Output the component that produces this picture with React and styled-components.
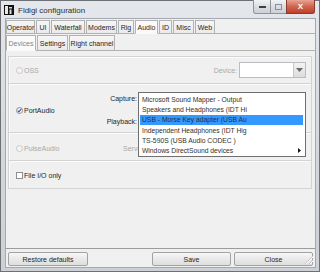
import React from "react";
import styled, { createGlobalStyle } from "styled-components";

const GlobalStyle = createGlobalStyle`
  html, body { margin: 0; padding: 0; background: #ffffff; }
  body { font-family: "Liberation Sans", Arial, sans-serif; font-size: 7px; color: #2b2b2b; }
  * { box-sizing: border-box; }
`;

const Window = styled.div`
  position: relative;
  width: 320px;
  height: 272px;
  display: flex;
  flex-direction: column;
  background: linear-gradient(#e4e7eb, #d3d7dc 60%, #cdd1d6);
  border: 1px solid #6d7075;
  padding: 0 3px 3px 4px;
`;

const TitleBar = styled.div`
  height: 17px;
  display: flex;
  align-items: center;
  gap: 4px;
  margin-left: -1px;
`;

const TitleText = styled.span`
  flex: 1;
  font-size: 8px;
  color: #303030;
  margin-top: 1px;
`;

const CaptionGroup = styled.div`
  align-self: flex-start;
  display: flex;
  margin-top: -1px;
  margin-right: 1px;
`;

const CaptionButton = styled.div`
  width: ${(p) => p.$w}px;
  height: 14px;
  display: flex;
  align-items: center;
  justify-content: center;
  border: 1px solid ${(p) => (p.$close ? "#8a3a30" : "#8f959c")};
  border-top: none;
  margin-left: -1px;
  background: ${(p) =>
    p.$close
      ? "linear-gradient(#e8a593, #d06a55 45%, #c23e28)"
      : "linear-gradient(#f1f3f5, #dadde1 50%, #cdd1d6)"};
  border-radius: ${(p) => p.$radius || "0"};
  color: #fff;
  font-weight: bold;
  font-size: 8px;
`;

const Client = styled.div`
  flex: 1;
  display: flex;
  flex-direction: column;
  background: #f0f0f0;
  border: 1px solid #a4a9af;
`;

const TabRow = styled.div`
  display: flex;
  height: ${(p) => p.$h}px;
  margin-top: 1px;
  margin-bottom: -1px;
  position: relative;
  z-index: 1;
`;

const Tab = styled.div`
  width: ${(p) => p.$w}px;
  display: flex;
  align-items: center;
  justify-content: center;
  border: 1px solid #b2b2b2;
  border-bottom: ${(p) => (p.$active ? "1px solid #fafafa" : "1px solid #b2b2b2")};
  margin-right: 1px;
  background: ${(p) => (p.$active ? "#fafafa" : "linear-gradient(#f6f6f6, #eaeaea)")};
  color: ${(p) => (p.$muted ? "#7d8590" : "#262626")};
  white-space: nowrap;
`;

const OuterPanel = styled.div`
  flex: 1;
  display: flex;
  flex-direction: column;
  border-top: 1px solid #b2b2b2;
`;

const InnerPanel = styled.div`
  flex: 1;
  display: flex;
  flex-direction: column;
  border-top: 1px solid #b2b2b2;
  border-bottom: 1px solid #9c9c9c;
  padding: 5px 3px 0 2px;
`;

const Group = styled.div`
  height: ${(p) => p.$h}px;
  margin-top: ${(p) => (p.$first ? "0" : "-1px")};
  display: flex;
  align-items: center;
  padding: 0 5px 0 7px;
  border: 1px solid #d3d3d3;
  box-shadow: inset 1px 1px 0 #fbfbfb;
`;

const Choice = styled.label`
  flex: 1;
  display: flex;
  align-items: center;
  gap: 1px;
  color: ${(p) => (p.$disabled ? "#a9a9a9" : "#262626")};
  margin-top: ${(p) => p.$dy || 0}px;
`;

const RadioDot = styled.span`
  width: 7px;
  height: 7px;
  border-radius: 50%;
  border: 1px solid ${(p) => (p.$disabled ? "#c9c9c9" : "#8b8e92")};
  background: ${(p) => (p.$disabled ? "#f4f4f4" : "linear-gradient(#e9e9e9, #ffffff)")};
  display: flex;
  align-items: center;
  justify-content: center;
`;

const CheckBox = styled.span`
  width: 7px;
  height: 7px;
  border: 1px solid #8b8e92;
  background: #ffffff;
`;

const FieldLabel = styled.span`
  color: ${(p) => (p.$disabled ? "#a9a9a9" : "#262626")};
  text-align: right;
  white-space: nowrap;
  margin-right: ${(p) => p.$gap || 0}px;
`;

const Combo = styled.div`
  width: ${(p) => p.$w}px;
  height: ${(p) => p.$h}px;
  display: flex;
  justify-content: flex-end;
  background: #ffffff;
  border: 1px solid #b9bcc1;
`;

const ComboButton = styled.div`
  width: 12px;
  display: flex;
  align-items: center;
  justify-content: center;
  border-left: 1px solid #c3c6ca;
  background: linear-gradient(#f3f3f3, #dcdcdc);
`;

const Fields = styled.div`
  display: grid;
  grid-template-columns: auto 167px;
  column-gap: 2px;
  row-gap: 11px;
  align-items: center;
  margin-top: 3px;
`;

const ServerField = styled.div`
  display: flex;
  align-items: center;
  margin-top: 3px;
`;

const ServerLabel = styled.span`
  width: 15px;
  overflow: hidden;
  color: #a9a9a9;
  white-space: nowrap;
`;

const Footer = styled.div`
  height: 18px;
  display: flex;
  justify-content: space-between;
  align-items: flex-start;
  padding: 3px 2px 0 2px;
`;

const ButtonPair = styled.div`
  display: flex;
  gap: 3px;
`;

const Button = styled.div`
  width: ${(p) => p.$w}px;
  height: 14px;
  display: flex;
  align-items: center;
  justify-content: center;
  border: 1px solid #a2a2a2;
  border-radius: 2px;
  background: linear-gradient(#f7f7f7, #e9e9e9 50%, #dedede);
  color: #262626;
`;

const Popup = styled.div`
  position: absolute;
  left: 137px;
  top: 91px;
  width: 168px;
  height: 65px;
  background: #ffffff;
  border: 1px solid #6f6f6f;
  padding: 0 1px;
  display: flex;
  flex-direction: column;
  font-size: 6.75px;
  z-index: 5;
`;

const PopupItem = styled.div`
  height: 10.6px;
  display: flex;
  align-items: center;
  justify-content: space-between;
  padding: 0 2px;
  margin-right: 1px;
  white-space: nowrap;
  color: #303030;
  background: ${(p) => (p.$active ? "#3399ff" : "transparent")};
  &:first-child { margin-top: 1px; }
`;

const Grip = styled.svg`
  position: absolute;
  right: 6px;
  bottom: 7px;
`;

const topTabs = [
  ["Operator", 29],
  ["UI", 14],
  ["Waterfall", 34],
  ["Modems", 31],
  ["Rig", 16],
  ["Audio", 23],
  ["ID", 13],
  ["Misc", 21],
  ["Web", 20],
];

const subTabs = [
  ["Devices", 30],
  ["Settings", 31],
  ["Right channel", 46],
];

const devices = [
  "Microsoft Sound Mapper - Output",
  "Speakers and Headphones (IDT Hi",
  "USB - Morse Key adapter (USB Au",
  "Independent Headphones (IDT Hig",
  "TS-590S (USB Audio CODEC )",
  "Windows DirectSound devices",
];

const AppIcon = () => (
  <svg width="10" height="10" viewBox="0 0 10 10">
    <rect width="10" height="10" fill="#111" />
    <rect x="1" y="1" width="3" height="8" fill="#e8e8e8" />
    <rect x="5" y="2" width="3" height="1.5" fill="#d8d8d8" />
    <rect x="5.5" y="4.5" width="2" height="4.5" fill="#d8d8d8" />
  </svg>
);

const Radio = ({ checked, disabled }) => (
  <RadioDot $disabled={disabled}>
    {checked && (
      <svg width="5" height="5" viewBox="0 0 5 5">
        <path d="M0.8 2.6 L2 3.8 L4.2 1" stroke="#2458b8" strokeWidth="1.1" fill="none" />
      </svg>
    )}
  </RadioDot>
);

export default function App() {
  return (
    <>
      <GlobalStyle />
      <Window>
        <TitleBar>
          <AppIcon />
          <TitleText>Fldigi configuration</TitleText>
          <CaptionGroup>
            <CaptionButton $w={18} $radius="0 0 0 3px">
              <svg width="7" height="3"><rect width="7" height="2" y="1" fill="#3b4048" /></svg>
            </CaptionButton>
            <CaptionButton $w={17}>
              <svg width="7" height="6"><rect x="0.5" y="0.5" width="6" height="5" fill="none" stroke="#8a9099" /></svg>
            </CaptionButton>
            <CaptionButton $w={29} $close $radius="0 0 3px 0">X</CaptionButton>
          </CaptionGroup>
        </TitleBar>

        <Client>
          <TabRow $h={14}>
            {topTabs.map(([name, w]) => (
              <Tab key={name} $w={w} $active={name === "Audio"}>{name}</Tab>
            ))}
          </TabRow>
          <OuterPanel>
            <TabRow $h={16}>
              {subTabs.map(([name, w]) => (
                <Tab key={name} $w={w} $active={name === "Devices"} $muted={name === "Devices"}>{name}</Tab>
              ))}
            </TabRow>
            <InnerPanel>
              <Group $h={28} $first>
                <Choice $disabled><Radio disabled />OSS</Choice>
                <FieldLabel $disabled $gap={2}>Device:</FieldLabel>
                <Combo $w={67} $h={16}>
                  <ComboButton>
                    <svg width="7" height="4"><path d="M0 0 L7 0 L3.5 4 Z" fill="#6a6a6a" /></svg>
                  </ComboButton>
                </Combo>
              </Group>

              <Group $h={50}>
                <Choice $dy={4}><Radio checked />PortAudio</Choice>
                <Fields>
                  <FieldLabel>Capture:</FieldLabel>
                  <Combo $w={167} $h={12} />
                  <FieldLabel>Playback:</FieldLabel>
                  <Combo $w={167} $h={12} />
                </Fields>
              </Group>

              <Group $h={29}>
                <Choice $disabled $dy={3}><Radio disabled />PulseAudio</Choice>
                <ServerField>
                  <ServerLabel>Server string:</ServerLabel>
                  <Combo $w={168} $h={12} />
                </ServerField>
              </Group>

              <Group $h={29}>
                <Choice $dy={1}><CheckBox />File I/O only</Choice>
              </Group>
            </InnerPanel>
          </OuterPanel>

          <Footer>
            <Button $w={80}>Restore defaults</Button>
            <ButtonPair>
              <Button $w={79}>Save</Button>
              <Button $w={79}>Close</Button>
            </ButtonPair>
          </Footer>
        </Client>

        <Popup>
          {devices.map((d, i) => (
            <PopupItem key={d} $active={i === 2}>
              <span>{d}</span>
              {i === devices.length - 1 && (
                <svg width="3" height="5"><path d="M0 0 L3 2.5 L0 5 Z" fill="#111" /></svg>
              )}
            </PopupItem>
          ))}
        </Popup>

        <Grip width="13" height="9" viewBox="0 0 13 9">
          <path d="M5 9 L13 1 M9 9 L13 5" stroke="#c4c4c4" strokeWidth="1" />
          <path d="M6 9 L13 2 M10 9 L13 6" stroke="#ffffff" strokeWidth="1" />
        </Grip>
      </Window>
    </>
  );
}
